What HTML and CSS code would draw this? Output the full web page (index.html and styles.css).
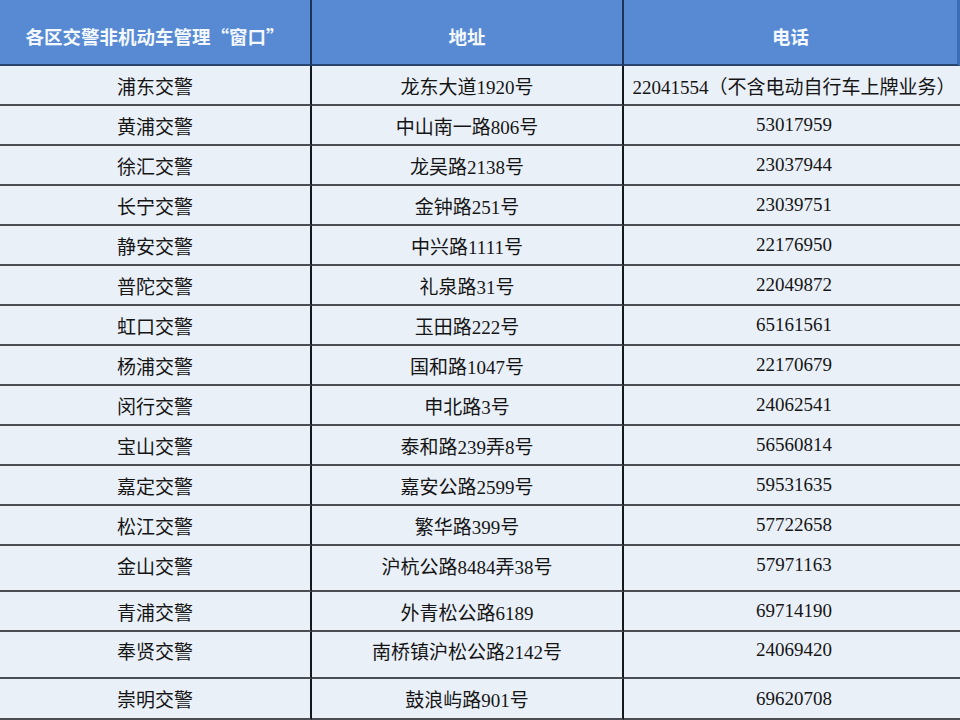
FILE: index.html
```html
<!DOCTYPE html>
<html lang="zh-CN">
<head>
<meta charset="utf-8">
<title>各区交警非机动车管理窗口</title>
<link rel="stylesheet" href="styles.css">
</head>
<body>
<table class="grid">
  <colgroup>
    <col class="c1">
    <col class="c2">
    <col class="c3">
  </colgroup>
  <thead>
    <tr><th>各区交警非机动车管理“窗口”</th><th>地址</th><th>电话</th></tr>
  </thead>
  <tbody>
    <tr><td>浦东交警</td><td>龙东大道1920号</td><td>22041554（不含电动自行车上牌业务）</td></tr>
    <tr><td>黄浦交警</td><td>中山南一路806号</td><td>53017959</td></tr>
    <tr><td>徐汇交警</td><td>龙吴路2138号</td><td>23037944</td></tr>
    <tr><td>长宁交警</td><td>金钟路251号</td><td>23039751</td></tr>
    <tr><td>静安交警</td><td>中兴路1111号</td><td>22176950</td></tr>
    <tr><td>普陀交警</td><td>礼泉路31号</td><td>22049872</td></tr>
    <tr><td>虹口交警</td><td>玉田路222号</td><td>65161561</td></tr>
    <tr><td>杨浦交警</td><td>国和路1047号</td><td>22170679</td></tr>
    <tr><td>闵行交警</td><td>申北路3号</td><td>24062541</td></tr>
    <tr><td>宝山交警</td><td>泰和路239弄8号</td><td>56560814</td></tr>
    <tr><td>嘉定交警</td><td>嘉安公路2599号</td><td>59531635</td></tr>
    <tr><td>松江交警</td><td>繁华路399号</td><td>57722658</td></tr>
    <tr class="r46"><td>金山交警</td><td>沪杭公路8484弄38号</td><td>57971163</td></tr>
    <tr><td>青浦交警</td><td>外青松公路6189</td><td>69714190</td></tr>
    <tr class="r47"><td>奉贤交警</td><td>南桥镇沪松公路2142号</td><td>24069420</td></tr>
    <tr class="r41"><td>崇明交警</td><td>鼓浪屿路901号</td><td>69620708</td></tr>
  </tbody>
</table>
</body>
</html>
```

FILE: styles.css
```css
html, body {
  margin: 0;
  padding: 0;
  background: #eaf0f8;
  overflow: hidden;
}
.grid {
  width: 960px;
  table-layout: fixed;
  border-collapse: separate;
  border-spacing: 0;
  font-family: "Liberation Serif", "Noto Sans CJK SC", serif;
  font-size: 19px;
  color: #151515;
}
.c1 { width: 312px; }
.c2 { width: 312px; }
.c3 { width: 336px; }
.grid th, .grid td {
  box-sizing: border-box;
  padding: 0;
  text-align: center;
  vertical-align: middle;
  white-space: nowrap;
}
.grid th {
  height: 66px;
  background: #578ad3;
  color: #f4f8ff;
  font-weight: bold;
  border-bottom: 2px solid #28456f;
  font-family: "Noto Sans CJK SC", sans-serif;
  font-size: 18.5px;
  padding-top: 7px;
}
.grid th:nth-child(1), .grid th:nth-child(2) {
  border-right: 2px solid #1d3357;
}
.grid th:nth-child(3) {
  border-right: 3px solid #3f6db3;
}
.grid td {
  height: 40px;
  background: #eaf0f8;
  border-bottom: 2px solid #4a4d52;
}
.grid td:nth-child(1), .grid td:nth-child(2) {
  border-right: 2px solid #16181c;
}
.grid td:nth-child(3) {
  padding-left: 4px;
}
.grid tr.r46 td { height: 46px; padding-bottom: 6px; }
.grid tr.r46 td:nth-child(3) { padding-bottom: 6px; }
.grid tr.r47 td { height: 47px; padding-bottom: 9px; }
.grid tr.r41 td { height: 41px; }
```
